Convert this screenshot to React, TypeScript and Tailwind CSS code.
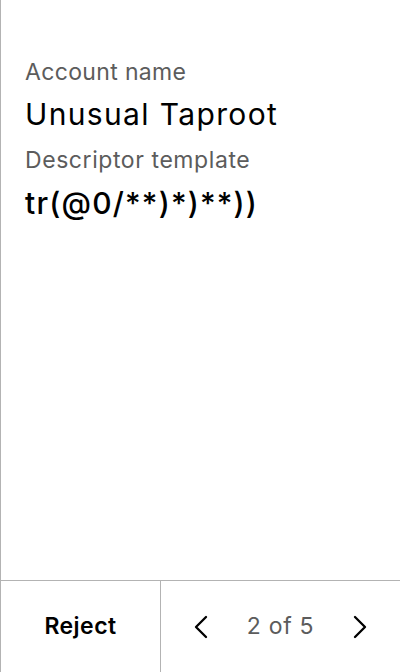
import { ChevronLeft, ChevronRight } from 'lucide-react';

export default function App() {
  return (
    <div
      className="w-[400px] h-[672px] flex flex-col bg-white border-l border-[#b3b3b3] text-black"
      style={{ fontFamily: 'Inter, "Noto Sans", sans-serif' }}
    >
      <div className="flex-1 px-6 pt-[57px]">
        <div className="text-[23px] leading-[30px] tracking-[0.015em] text-[#5c5c5c]">Account name</div>
        <div className="text-[30px] leading-[40px] tracking-[0.045em] mt-[7px]">Unusual Taproot</div>
        <div className="text-[23px] leading-[30px] tracking-[0.025em] text-[#5c5c5c] mt-[11px]">Descriptor template</div>
        <div className="text-[30px] leading-[40px] tracking-[0.04em] font-medium mt-[8px]">tr(@0/**)*)**))</div>
      </div>
      <div className="h-[92px] flex border-t border-[#b3b3b3]">
        <button className="w-[160px] border-r border-[#b3b3b3] text-[23px] tracking-[0.02em] font-semibold">Reject</button>
        <div className="flex-1 flex items-center justify-between px-5">
          <ChevronLeft className="w-10 h-10" strokeWidth={1.4} />
          <span className="text-[23px] tracking-[0.03em] text-[#5c5c5c]">2 of 5</span>
          <ChevronRight className="w-10 h-10" strokeWidth={1.4} />
        </div>
      </div>
    </div>
  );
}
